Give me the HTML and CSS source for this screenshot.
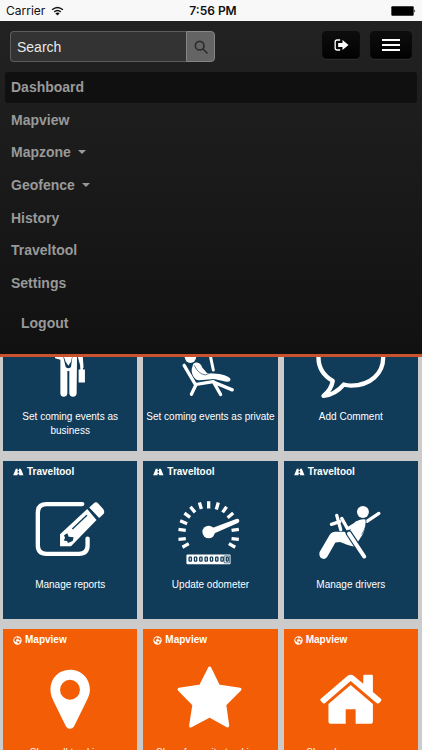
FILE: index.html
```html
<!DOCTYPE html>
<html lang="en">
<head>
<meta charset="utf-8">
<meta name="viewport" content="width=device-width, initial-scale=1">
<title>Dashboard</title>
<link rel="stylesheet" href="styles.css">
</head>
<body>
<svg class="defs" aria-hidden="true">
  <symbol id="road" viewBox="0 0 32 24"><path d="M8 2h6l-.5 5h4L17 2h6l8 20H18l-.5-5h-4L13 22H0z"/><path class="cut" d="M14 2h3l.3 4h-3.600zM13.300 9h4.400l.4 5h-5.200z"/></symbol>
  <symbol id="globe" viewBox="0 0 28 28"><circle cx="14" cy="14" r="13"/><path class="cut" d="M4 9l6-5 5 2-1 4-4 1-1 3 3 3-3 2-5-4zM18 5l5 4 1 4-3 1-3-3-3-1zM13 17l5-1 3 2-4 6-3-2z"/></symbol>
</svg>
<header class="top">
  <div class="status">
    <span class="carrier">Carrier
      <svg class="wifi" viewBox="0 0 36 27" aria-hidden="true"><path d="M3 10Q18-3 33 10M9 16Q18 8 27 16"/><path class="dot" d="M12 20Q18 15 24 20L18 26z"/></svg>
    </span>
    <span class="time">7:56 PM</span>
    <svg class="battery" viewBox="0 0 75 30" aria-label="Battery full"><rect x="1" y="1" width="67" height="28" rx="3"/><path d="M70 10q5 5 0 10z"/></svg>
  </div>
  <div class="navbar">
    <div class="bar">
      <form class="search">
        <input type="text" placeholder="Search" aria-label="Search">
        <button type="button" aria-label="Search"><svg viewBox="0 0 42 42" aria-hidden="true"><circle cx="17" cy="17" r="13"/><path d="M27 27l12 12"/></svg></button>
      </form>
      <div class="actions">
        <button class="btn exit" type="button" aria-label="Log out"><svg viewBox="0 0 44 36" aria-hidden="true"><path class="line" d="M18 3H9Q3 3 3 9v18q0 6 6 6h9"/><path d="M12 12h13V3l18 15-18 15v-9H12z"/></svg></button>
        <button class="btn menu" type="button" aria-label="Menu"><i></i><i></i><i></i></button>
      </div>
    </div>
    <nav>
      <ul class="links">
        <li><a class="active" href="#">Dashboard</a></li>
        <li><a href="#">Mapview</a></li>
        <li><a class="drop" href="#">Mapzone</a></li>
        <li><a class="drop" href="#">Geofence</a></li>
        <li><a href="#">History</a></li>
        <li><a href="#">Traveltool</a></li>
        <li><a href="#">Settings</a></li>
      </ul>
      <a class="logout" href="#">Logout</a>
    </nav>
  </div>
</header>
<main class="tiles">
  <a class="tile blue" href="#">
    <h2><svg><use href="#road"/></svg>Traveltool</h2>
    <svg class="art" viewBox="9 -102 405 297" aria-hidden="true"><circle cx="206" cy="-25" r="20"/><path d="M166 40V12q0-14 16-14h48q16 0 18 16l4 54-8 2-12-44v26l-1 94q-2 10-11 10t-11-10V78h-6v68q-2 10-11 10t-10-10V44z"/><path class="cut" d="M188 24l10 26 8 12 8-12 6-26-6 42q-8 8-16 0z"/><path d="M237 74h5V62h8v12h6v39h-19z"/></svg>
    <p>Set coming events as business</p>
  </a>
  <a class="tile blue" href="#">
    <h2><svg><use href="#road"/></svg>Traveltool</h2>
    <svg class="art" viewBox="-48 -117 405 297" aria-hidden="true"><circle cx="95" cy="22" r="17"/><path class="s10" d="M76 46l34 58 54-9 22 39M112 104l-14 29M166 97l55 23"/><path class="s9" d="M156 22l8 38"/><path d="M101 50q2-14 16-12 9 2 14 15l14 16 38 3q34 8 33 18-4 8-16 5l-34-8-43 4q-13 2-21-15-6-16-1-26z"/><path class="cutline" d="M107 47q12 26 33 28l17-7"/></svg>
    <p>Set coming events as private</p>
  </a>
  <a class="tile blue" href="#">
    <h2><svg><use href="#road"/></svg>Traveltool</h2>
    <svg class="art" viewBox="219 -102 405 297" aria-hidden="true"><path class="s14" d="M420-42c-60 0-97 36-97 80 0 29 14 53 43 70q-4 26-28 45 36-4 61-34 10 3 22 3c60 0 97-38 97-84s-38-80-98-80z"/></svg>
    <p>Add Comment</p>
  </a>
  <a class="tile blue" href="#">
    <h2><svg><use href="#road"/></svg>Traveltool</h2>
    <svg class="art" viewBox="9 72 405 297" aria-hidden="true"><path class="s13" d="M248 147H140q-26 0-26 26v98q0 26 26 26h98q26 0 26-26v-20"/><path d="M263 162l28 33-77 79h-33v-36zM269 157l14-13q7-5 13 1l15 17q6 8 1 15l-13 12z"/><path class="cutline w4" d="M219 221l42-40"/><path class="cut" d="M193 241l10-6 4 10 15 2-3 11-14 6-3-6-10-1 4-8z"/></svg>
    <p>Manage reports</p>
  </a>
  <a class="tile blue" href="#">
    <h2><svg><use href="#road"/></svg>Traveltool</h2>
    <svg class="art" viewBox="12 72 405 297" aria-hidden="true"><path class="ticks" d="M150 266l-19 11M141 251l-22 2M141 226l-22-3M145 206l-21-9M154 187l-17-13M169 172l-14-17M188 162l-6-20M210 160v-22M233 163l6-21M252 172l12-17M267 188l17-14M279 226l22-3M279 251l22 2M271 266l19 11"/><circle cx="210" cy="231" r="19"/><path d="M215 221l78-29q6-2 9 3 2 6-4 9l-77 34z"/><rect x="143" y="299" width="133" height="29" rx="3"/><g class="digits"><rect x="151" y="307" width="7" height="12" rx="2"/><rect x="167" y="307" width="7" height="12" rx="2"/><rect x="183" y="307" width="7" height="12" rx="2"/><rect x="199" y="307" width="7" height="12" rx="2"/><rect x="215" y="307" width="7" height="12" rx="2"/><rect x="231" y="307" width="7" height="12" rx="2"/><rect x="247" y="307" width="7" height="12" rx="2"/><rect x="263" y="307" width="6" height="12" rx="2"/><path class="thin" d="M258 303h15v21h-15z"/></g></svg>
    <p>Update odometer</p>
  </a>
  <a class="tile blue" href="#">
    <h2><svg><use href="#road"/></svg>Traveltool</h2>
    <svg class="art" viewBox="12 72 405 297" aria-hidden="true"><circle cx="250" cy="171" r="18"/><path class="s10" d="M262 199l36-24"/><path d="M210 228l14-24q14-13 34-11 3 18-8 44-12 22-28 38l-14-4z"/><path d="M119 292l30-51q6-11 17-11h26q8 0 13 10l14 32q-14 1-26-6l-12-5-14 2-24 42q-6 10-16 6t-8-19z"/><path class="s10" d="M186 190l18 32 28-18"/><path class="s10" d="M171 181l12 43M155 208l25-8"/><path class="cutline w17" d="M207 234l47 71"/><path class="s12" d="M208 236l46 69"/><path class="cutline" d="M259 194q4 18-12 44"/></svg>
    <p>Manage drivers</p>
  </a>
  <a class="tile orange" href="#">
    <h2><svg class="globe"><use href="#globe"/></svg>Mapview</h2>
    <svg class="art" viewBox="9 81 405 297" aria-hidden="true"><path fill-rule="evenodd" d="M211 149c-34 0-59 26-59 59 0 17 6 29 11 39l36 73q4 7 12 7t12-7l36-73c6-12 12-22 12-39 0-33-26-59-60-59zm0 30a30 30 0 1 1 0 60 30 30 0 0 1 0-60z"/></svg>
    <p>Show all trackings</p>
  </a>
  <a class="tile orange" href="#">
    <h2><svg class="globe"><use href="#globe"/></svg>Mapview</h2>
    <svg class="art" viewBox="432 81 405 297" aria-hidden="true"><path class="star" d="M633 144l26 54 65 10-46 46 9 64-54-30-57 30 10-64-45-46 65-10z"/></svg>
    <p>Show favourite trackings</p>
  </a>
  <a class="tile orange" href="#">
    <h2><svg class="globe"><use href="#globe"/></svg>Mapview</h2>
    <svg class="art" viewBox="219 81 405 297" aria-hidden="true"><path d="M330 236l80-68q10-8 20 0l28 23v-23q0-4 4-4h21q4 0 4 4v48l24 20q4 4 0 8l-6 6q-3 2-7-1l-78-66-77 66q-4 3-7 0l-6-6q-4-4 0-7z"/><path d="M353 252l67-57 67 57v52q0 8-8 8h-44v-44h-30v44h-44q-8 0-8-8z"/></svg>
    <p>Show home on map</p>
  </a>
</main>
</body>
</html>
```
FILE: styles.css
```css
* { box-sizing: border-box; }
html, body { margin: 0; height: 100%; }
body {
  overflow: hidden;
  background: #cbcbcb;
  font-family: "Liberation Sans", Arial, sans-serif;
}
a { color: inherit; text-decoration: none; }
button { padding: 0; }
.defs { position: absolute; width: 0; height: 0; }

/* Fixed header that lies over the tiles */
.top { position: fixed; top: 0; left: 0; right: 0; z-index: 2; }
.status {
  display: grid;
  grid-template-columns: 1fr auto 1fr;
  align-items: center;
  height: 21px;
  padding: 0 6px;
  background: #f8f8f8;
  color: #111;
  font: 12px/21px Inter, sans-serif;
}
.carrier { display: flex; align-items: center; gap: 6px; }
.time { padding-left: 4px; font-size: 12px; font-weight: 600; }
.wifi { width: 13px; height: 10px; fill: none; stroke: #111; stroke-width: 4; }
.wifi .dot { fill: #111; stroke: none; }
.battery { width: 25px; height: 10px; justify-self: end; fill: #000; }

.navbar {
  padding: 10px 5px 16px;
  border-bottom: 3px solid #c9532f;
  background: linear-gradient(#222, #111);
}
.bar { display: flex; justify-content: space-between; padding: 0 5px; }
.search { display: flex; width: 205px; height: 31px; }
.search input {
  flex: 1;
  min-width: 0;
  padding: 0 6px;
  border: 1px solid #5c5c5c;
  border-right: 0;
  border-radius: 4px 0 0 4px;
  background: #333;
  color: #eee;
  font: 14px "Liberation Sans", Arial, sans-serif;
}
.search input::placeholder { color: #e8e8e8; opacity: 1; }
.search button {
  display: grid;
  place-items: center;
  width: 29px;
  border: 1px solid #868686;
  border-radius: 0 4px 4px 0;
  background: #646464;
}
.search button svg { width: 14px; height: 14px; fill: none; stroke: #2c2c2c; stroke-width: 5; stroke-linecap: round; }
.actions { display: flex; gap: 10px; }
.btn {
  display: flex;
  flex-direction: column;
  align-items: center;
  justify-content: center;
  width: 38px;
  height: 28px;
  border: 1px solid #0b0b0b;
  border-radius: 4px;
  background: linear-gradient(#0d0d0d, #020202);
  box-shadow: 0 1px 0 #2c2c2c;
}
.exit svg { width: 15px; height: 12px; fill: #fff; }
.exit .line { fill: none; stroke: #fff; stroke-width: 4; }
.menu { width: 42px; gap: 3px; }
.menu i { width: 18px; height: 2px; background: #fff; }

.links {
  display: grid;
  grid-auto-rows: 1fr;
  gap: 2px;
  height: 226px;
  margin: 10px 0 0;
  padding: 0;
  list-style: none;
}
.links a, .logout {
  display: flex;
  align-items: center;
  height: 100%;
  padding: 0 6px;
  border-radius: 3px;
  color: #999;
  font-size: 14px;
  font-weight: bold;
}
.links .active { background: #101010; }
.drop::after {
  content: "";
  margin-left: 7px;
  border: 4px solid transparent;
  border-top-color: #999;
  border-bottom: 0;
}
.logout { height: 30px; margin-top: 10px; padding: 0 16px; }

/* Tiles */
.tiles {
  display: grid;
  grid-template-columns: repeat(3, minmax(0, 1fr));
  grid-auto-rows: 158px;
  gap: 10px 6px;
  padding: 293px 4px 10px 3px;
}
.tile { color: #fff; --tile: #103c59; background: var(--tile); }
.orange { --tile: #f25d05; }
.tile h2 {
  display: flex;
  align-items: center;
  gap: 3px;
  margin: 0;
  padding: 4px 10px 0;
  font-size: 10px;
  line-height: 14px;
}
.tile h2 svg { width: 11px; height: 8px; fill: #fff; }
.tile h2 .globe { width: 9px; height: 9px; }
.tile p { margin: 0; text-align: center; font-size: 10px; line-height: 14px; }
.art { display: block; width: 100%; height: 99px; fill: #fff; }
.art path { stroke-linecap: round; }
.cut { fill: var(--tile); }
.art .s9, .art .s10, .art .s12, .art .s13, .art .s14, .ticks, .cutline { fill: none; stroke: #fff; }
.s9 { stroke-width: 9; }
.s10 { stroke-width: 10; }
.s12 { stroke-width: 12; }
.s13 { stroke-width: 13; }
.s14 { stroke-width: 13; stroke-linejoin: round; }
.art .ticks { stroke-width: 10; stroke-linecap: butt; }
.art .cutline { stroke: var(--tile); stroke-width: 2; }
.art .w4 { stroke-width: 4; }
.art .w17 { stroke-width: 19; }
.digits { fill: none; stroke: var(--tile); stroke-width: 4; }
.digits .thin { stroke-width: 2; }
.star { stroke: #fff; stroke-width: 10; stroke-linejoin: round; }
```
